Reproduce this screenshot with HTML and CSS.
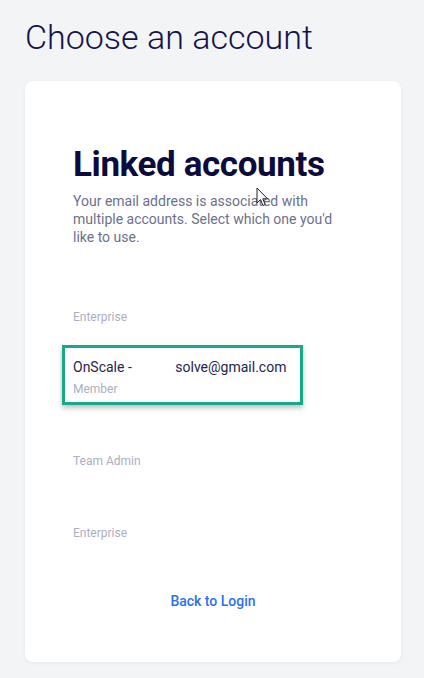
FILE: index.html
```html
<!DOCTYPE html>
<html lang="en">
<head>
    <meta charset="UTF-8">
    <meta name="viewport" content="width=device-width, initial-scale=1.0">
    <title>Choose an account</title>
    <link rel="stylesheet" href="styles.css">
</head>
<body>
    <div class="page">
        <h1 class="page-title">Choose an account</h1>

        <div class="card">
            <h2>Linked accounts</h2>
            <p class="intro">Your email address is associated with multiple accounts. Select which one you'd like to use.</p>

            <ul class="accounts">
                <li class="account">
                    <div class="account-name">&nbsp;</div>
                    <div class="account-role">Enterprise</div>
                </li>
                <li class="account selected">
                    <div class="account-name">OnScale - <span class="email">solve@gmail.com</span></div>
                    <div class="account-role">Member</div>
                </li>
                <li class="account">
                    <div class="account-name">&nbsp;</div>
                    <div class="account-role">Team Admin</div>
                </li>
                <li class="account">
                    <div class="account-name">&nbsp;</div>
                    <div class="account-role">Enterprise</div>
                </li>
            </ul>

            <a class="back" href="#">Back to Login</a>

            <svg class="cursor" width="13" height="20" viewBox="0 0 13 20">
                <path d="M1 1 L1 16 L4.5 12.5 L7 18.5 L9.2 17.5 L6.8 11.8 L11.5 11.8 Z" fill="#fff" stroke="#222" stroke-width="1"/>
            </svg>
        </div>
    </div>
</body>
</html>
```

FILE: styles.css
```css
body {
    margin: 0;
    background-color: #f3f4f6;
    font-family: 'Roboto', 'Liberation Sans', sans-serif;
}
.page {
    padding: 16px 23px 16px 25px;
}
.page-title {
    margin: 0 0 22px;
    font-size: 34px;
    font-weight: 300;
    line-height: 43px;
    color: #14134a;
}
.card {
    position: relative;
    background-color: #fff;
    border-radius: 8px;
    box-shadow: 0 1px 4px rgba(0,0,0,0.06);
    padding: 64px 48px 52px;
    height: 581px;
    box-sizing: border-box;
}
h2 {
    margin: 0;
    font-size: 35px;
    font-weight: 700;
    line-height: 40px;
    color: #0c0b3d;
    letter-spacing: -0.4px;
}
.intro {
    margin: 7px 0 0;
    font-size: 14px;
    line-height: 18px;
    color: #6d708c;
}
.accounts {
    list-style: none;
    margin: 36px 0 0;
    padding: 0;
}
.account {
    height: 72px;
    box-sizing: border-box;
    padding-top: 3px;
    margin-left: -11px;
    padding-left: 11px;
    width: 241px;
}
.account-name {
    font-size: 14px;
    line-height: 20px;
    color: #25244f;
}
.account-role {
    font-size: 12px;
    line-height: 16px;
    color: #adaec3;
    margin-top: 4px;
}
.account.selected {
    border: 3px solid #18a98a;
    height: 60px;
    margin-top: -9px;
    margin-bottom: 21px;
    padding-left: 8px;
    padding-top: 9px;
    box-shadow: 0 3px 5px rgba(0,0,0,0.25);
}
.email {
    margin-left: 40px;
}
.back {
    display: block;
    text-align: center;
    margin-top: 23px;
    font-size: 14px;
    font-weight: 500;
    color: #2d6ff0;
    text-decoration: none;
}
.cursor {
    position: absolute;
    left: 231px;
    top: 106px;
}
```
